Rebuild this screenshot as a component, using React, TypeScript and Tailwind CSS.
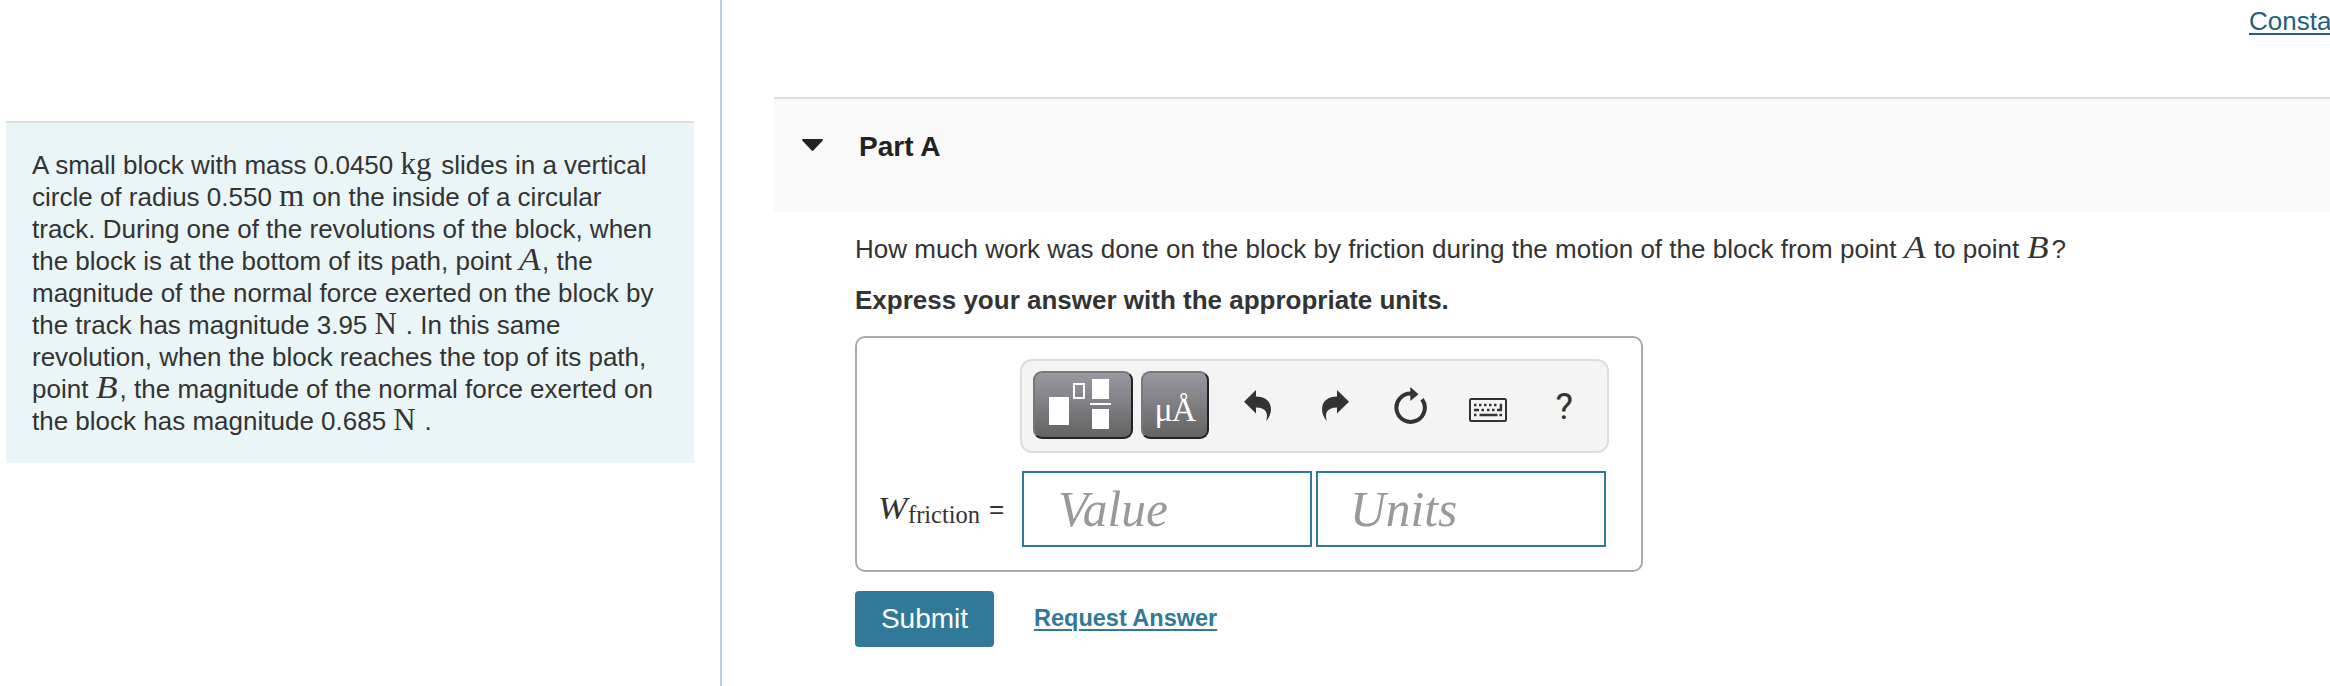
import React from 'react'
import clsx from 'clsx'

const MathText = ({
  children,
  italic = false,
  className = '',
}: {
  children: React.ReactNode
  italic?: boolean
  className?: string
}) => (
  <span
    className={clsx(
      "inline-block origin-left font-['Liberation_Serif',serif] text-[31px] leading-[20px]",
      italic && 'scale-x-[1.14] italic',
      className,
    )}
  >
    {children}
  </span>
)

const problemLines: React.ReactNode[] = [
  <>A small block with mass 0.0450 <MathText className="w-[33.5px]">kg</MathText> slides in a vertical</>,
  <>circle of radius 0.550 <MathText className="w-[26px] scale-x-105">m</MathText> on the inside of a circular</>,
  'track. During one of the revolutions of the block, when',
  <>the block is at the bottom of its path, point <MathText italic className="w-[23px]">A</MathText>, the</>,
  'magnitude of the normal force exerted on the block by',
  <>the track has magnitude 3.95 <MathText className="w-[24px]">N</MathText> . In this same</>,
  'revolution, when the block reaches the top of its path,',
  <>point <MathText italic className="w-[24px]">B</MathText>, the magnitude of the normal force exerted on</>,
  <>the block has magnitude 0.685 <MathText className="w-[24px]">N</MathText> .</>,
]

const ProblemPanel = () => (
  <aside className="h-[686px] w-[722px] shrink-0 border-r-2 border-[#bfcce0] pt-[121px] pl-1.5">
    <div className="h-[342px] w-[688px] border-t-2 border-[#dddddd] bg-[#eaf5f7] px-[26px] pt-[26px]">
      {problemLines.map((line, i) => (
        <p key={i} className="h-8 whitespace-nowrap text-[26px] leading-8">
          {line}
        </p>
      ))}
    </div>
  </aside>
)

const UndoIcon = ({ className = '' }: { className?: string }) => (
  <svg width="28" height="32" viewBox="0 0 28 32" fill="currentColor" className={className}>
    <path d="M0 11.8 12 0v6.4c8.500 0 15 4.300 15 13.100 0 4.200-1.900 8.300-4.900 11.500 2.300-6.900.8-13.600-10.100-13.600v6.200Z" />
  </svg>
)

const ResetIcon = () => (
  <svg width="34" height="38" viewBox="0 0 34 38">
    <path d="M17 6.500A14.200 14.200 0 1 0 28 12.200" fill="none" stroke="currentColor" strokeWidth="4" />
    <path d="M16.300 0 24.500 7.200 16.300 14Z" fill="currentColor" />
  </svg>
)

const KeyboardIcon = () => (
  <svg width="38" height="24" viewBox="0 0 38 24">
    <rect x="1" y="1" width="36" height="22" rx="1.500" fill="none" stroke="currentColor" strokeWidth="2" />
    <g fill="none" stroke="currentColor" strokeWidth="2.400">
      <path d="M5 7h2.500M10 7h2.500M15 7h2.500M20 7h2.500M25 7h2.500" />
      <path d="M5 12h5M12.500 12h2.500M18 12h2.500M23 12h2.500M28 12h5M31.900 5.800V12" />
      <path d="M5 17h2.500M10.500 17h18M30.500 17h2.500" />
    </g>
  </svg>
)

const TemplateIcon = () => (
  <svg width="62" height="50" viewBox="0 0 62 50" fill="#ffffff">
    <rect x="0" y="18" width="20" height="28" />
    <rect x="25" y="5" width="10" height="14" fill="none" stroke="#ffffff" strokeWidth="2" />
    <rect x="43" y="0" width="17" height="20" />
    <rect x="41" y="24" width="21" height="2" />
    <rect x="43" y="30" width="17" height="20" />
  </svg>
)

const ToolSlot = ({ label, children }: { label: string; children: React.ReactNode }) => (
  <button aria-label={label} className="flex h-[68px] w-[76.5px] shrink-0 items-center justify-center text-[#333333]">
    {children}
  </button>
)

const toolButton =
  'flex h-[68px] shrink-0 rounded-[9px] border-2 border-t-[#777777] border-l-[#777777] border-r-[#222222] border-b-[#222222] bg-linear-to-b from-[#9a99a3] to-[#636363] text-white'

const Toolbar = () => (
  <div className="flex h-[94px] w-[589px] rounded-xl border-2 border-[#dddddd] bg-[#f4f4f4] pt-2.5 pl-[11px]">
    <button aria-label="Templates" className={clsx(toolButton, 'w-[100px] pt-1.5 pl-3.5')}>
      <TemplateIcon />
    </button>
    <button
      aria-label="Symbols"
      className={clsx(toolButton, "ml-2 w-[68px] justify-center pt-[17px] font-['Liberation_Serif',serif] text-[34px] leading-[40px] tracking-[-1px]")}
    >
      μÅ
    </button>
    <div className="ml-[11px] flex pt-px">
      <ToolSlot label="Undo">
        <UndoIcon />
      </ToolSlot>
      <ToolSlot label="Redo">
        <UndoIcon className="-scale-x-100" />
      </ToolSlot>
      <ToolSlot label="Reset">
        <ResetIcon />
      </ToolSlot>
      <ToolSlot label="Keyboard">
        <span className="pt-2">
          <KeyboardIcon />
        </span>
      </ToolSlot>
      <ToolSlot label="Help">
        <span className="font-[Roboto,sans-serif] text-[37px] leading-none">?</span>
      </ToolSlot>
    </div>
  </div>
)

const AnswerField = ({ label, className = '' }: { label: string; className?: string }) => (
  <div className="h-[76px] w-[290px] border-2 border-[#317999]">
    <span
      className={clsx(
        "inline-block origin-left font-['Liberation_Serif',serif] text-[51px] leading-[72px] text-[#999999] italic",
        className,
      )}
    >
      {label}
    </span>
  </div>
)

const AnswerBox = () => (
  <div className="h-[236px] w-[788px] rounded-[10px] border-2 border-[#aaaaaa] pt-[21px]">
    <div className="pl-[163px]">
      <Toolbar />
    </div>
    <div className="mt-[18px] flex">
      <div className="flex w-[165px] pl-[21px] whitespace-nowrap">
        <span className="w-[29px] origin-left scale-x-110 font-['Liberation_Serif',serif] text-[32px] leading-[75px] italic">W</span>
        <span className="ml-px w-[72px] pt-1.5 font-['Liberation_Serif',serif] text-[24.5px] leading-[75px]">friction</span>
        <span className="ml-[9px] text-[26px] leading-[76px]">=</span>
      </div>
      <div className="flex gap-1">
        <AnswerField label="Value" className="ml-[34px] scale-x-[0.97]" />
        <AnswerField label="Units" className="ml-8 scale-x-[0.97]" />
      </div>
    </div>
  </div>
)

const App: React.FC = () => {
  return (
    <div className="flex h-[686px] w-[2330px] overflow-hidden bg-white font-['Liberation_Sans',Arial,sans-serif] text-[#333333]">
      <ProblemPanel />
      <main className="w-[1608px] shrink-0 pl-[52px]">
        <div className="h-[97px] pt-[5px] pl-[1475px] text-[26px] leading-[32px] whitespace-nowrap">
          <a className="text-[#235f79] underline decoration-2 underline-offset-[3px]">Consta</a>
        </div>
        <div className="flex h-[115px] w-[1556px] border-t-2 border-[#dddddd] bg-[#f9f9f9] pl-7">
          <svg width="21" height="12" viewBox="0 0 21 12" className="mt-10 shrink-0" fill="#222222">
            <path d="M1 0h19c1 0 1.200 1 .5 1.700L11.600 11.300c-.7.7-1.500.7-2.200 0L.5 1.700C-.2 1 0 0 1 0Z" />
          </svg>
          <h2 className="ml-9 pt-8 text-[28px] leading-[32px] font-bold text-[#222222]">Part A</h2>
        </div>
        <div className="pl-[81px]">
          <p className="mt-[21px] h-8 text-[26px] leading-8 tracking-[0.01px] whitespace-nowrap">
            How much work was done on the block by friction during the motion of the block from point{' '}
            <MathText italic className="w-[23px]">A</MathText> to point <MathText italic className="w-[25px]">B</MathText>?
          </p>
          <p className="mt-[19px] h-8 text-[26px] leading-8 font-bold whitespace-nowrap">
            Express your answer with the appropriate units.
          </p>
          <div className="mt-5">
            <AnswerBox />
          </div>
          <div className="mt-[19px] flex">
            <button className="h-14 w-[139px] rounded bg-[#317999] text-[28px] leading-[56px] text-white">Submit</button>
            <a className="ml-10 pt-[11px] text-[23.5px] leading-[32px] font-bold text-[#317999] underline decoration-2 underline-offset-[3px]">
              Request Answer
            </a>
          </div>
        </div>
      </main>
    </div>
  )
}

export default App
